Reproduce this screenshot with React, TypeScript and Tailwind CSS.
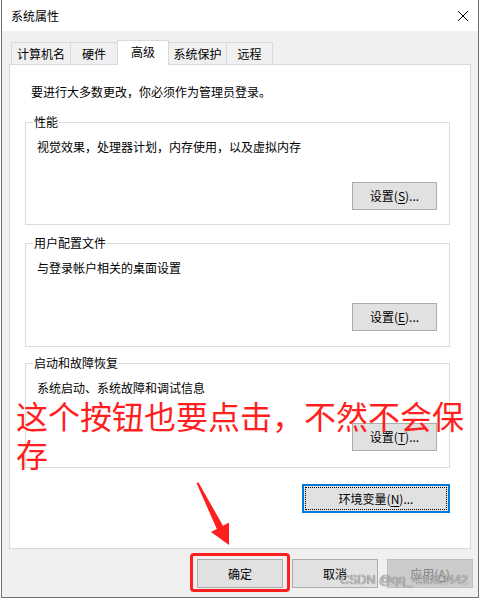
import type { ReactNode } from 'react';

const font = "font-['Noto_Sans_CJK_SC','Microsoft_YaHei',sans-serif]";

const tabs = [
  { name: '计算机名', w: 'w-[60px]' },
  { name: '硬件', w: 'w-[48px]' },
  { name: '高级', w: 'w-[52px]', active: true },
  { name: '系统保护', w: 'w-[59px]' },
  { name: '远程', w: 'w-[47px]' }
];

function Key({ k }: { k: string }) {
  return <span className="underline underline-offset-2">{k}</span>;
}

function SetBtn({ k }: { k: string }) {
  return (
    <button className="ml-auto flex h-[28px] w-[85px] items-center justify-center border border-[#adadad] bg-[#e1e1e1] text-[12px] text-black">
      设置(<Key k={k} />)...
    </button>
  );
}

function Group({
  title,
  desc,
  k,
  box
}: {
  title: string;
  desc: string;
  k: string;
  box: string;
}) {
  return (
    <div className={`ml-[15px] flex w-[425px] flex-col border border-[#dcdcdc] pl-[11px] pr-[12px] ${box}`}>
      <div className="-ml-[4px] -mt-[9px] self-start bg-white px-[1px] leading-[16px]">
        {title}
      </div>
      <div className="mt-[9px] leading-[16px]">{desc}</div>
      <div className="mt-[27px] flex">
        <SetBtn k={k} />
      </div>
    </div>
  );
}

function FootBtn({ children, disabled }: { children: ReactNode; disabled?: boolean }) {
  return (
    <button
      className={
        disabled
          ? 'flex h-[29px] w-[86px] items-center justify-center border border-[#bfbfbf] bg-[#cccccc] text-[12px] text-[#838383]'
          : 'flex h-[29px] w-[86px] items-center justify-center border border-[#adadad] bg-[#e1e1e1] text-[12px] text-black'
      }
    >
      {children}
    </button>
  );
}

export default function App() {
  return (
    <div className={`relative h-[599px] w-[480px] overflow-hidden bg-white pl-px text-[12px] text-black ${font}`}>
      <div className="flex h-[598px] w-[478px] flex-col border-x border-b border-[#707070] bg-[#f0f0f0]">
        {/* title bar */}
        <div className="flex h-[31px] items-center justify-between bg-white pl-[9px] pr-[8px]">
          <span className="leading-[16px]">系统属性</span>
          <svg width="12" height="12" viewBox="0 0 12 12" className="mr-[1px]">
            <path d="M1 1L11 11M11 1L1 11" stroke="#000" strokeWidth="1" />
          </svg>
        </div>

        {/* tabs */}
        <div className="flex h-[33px] items-end pl-[9px]">
          {tabs.map((t, i) =>
            t.active ? (
              <div
                key={t.name}
                className={`relative z-10 -mb-px -ml-px flex h-[25px] ${t.w} items-center justify-center border-x border-t border-[#d9d9d9] bg-white pb-[2px]`}
              >
                {t.name}
              </div>
            ) : (
              <div
                key={t.name}
                className={`flex h-[22px] ${t.w} ${i === 0 ? '' : '-ml-px'} items-center justify-center border-x border-t border-[#d9d9d9] bg-[#f0f0f0]`}
              >
                {t.name}
              </div>
            )
          )}
        </div>

        {/* panel */}
        <div className="ml-[7px] flex h-[485px] w-[462px] flex-col border border-[#d9d9d9] bg-white pt-[19px]">
          <div className="pl-[21px] leading-[16px]">要进行大多数更改，你必须作为管理员登录。</div>
          <Group title="性能" desc="视觉效果，处理器计划，内存使用，以及虚拟内存" k="S" box="mt-[22px] h-[103px]" />
          <Group title="用户配置文件" desc="与登录帐户相关的桌面设置" k="E" box="mt-[18px] h-[104px]" />
          <Group title="启动和故障恢复" desc="系统启动、系统故障和调试信息" k="T" box="mt-[16px] h-[105px]" />
          <div className="mr-[20px] mt-[16px] flex justify-end">
            <button className="h-[29px] w-[148px] border-2 border-[#0078d7] bg-[#e1e1e1] p-px">
              <div className="flex h-full w-full items-center justify-center border border-dotted border-black text-[12px]">
                环境变量(<Key k="N" />)...
              </div>
            </button>
          </div>
        </div>

        {/* footer buttons */}
        <div className="mt-[10px] flex justify-end gap-[9px] pr-[5px]">
          <FootBtn>确定</FootBtn>
          <FootBtn>取消</FootBtn>
          <FootBtn disabled>
            应用(<Key k="A" />)
          </FootBtn>
        </div>
      </div>

      {/* annotations */}
      <div className="pointer-events-none absolute left-[16px] top-[396px] w-[452px] text-[32px] leading-[38px] text-[#ff1f1f]">
        这个按钮也要点击，不然不会保存
      </div>
      <svg className="pointer-events-none absolute left-0 top-0" width="480" height="599">
        <polygon
          points="196.5,483 198.5,482.5 223,525.8 229,522.5 229,545 211,532 216.8,529"
          fill="#ff1f1f"
        />
      </svg>
      <div className="pointer-events-none absolute left-[190px] top-[553px] h-[39px] w-[100px] rounded-[4px] border-[3px] border-[#ff1f1f]" />
      <div className="pointer-events-none absolute left-[340px] top-[572px] whitespace-nowrap font-['Liberation_Sans',sans-serif] text-[12.5px] leading-[16px] text-[#c4c4c4] [text-shadow:0_0_1px_#3a3a3a]">
        CSDN @qq_43062442
      </div>
    </div>
  );
}
